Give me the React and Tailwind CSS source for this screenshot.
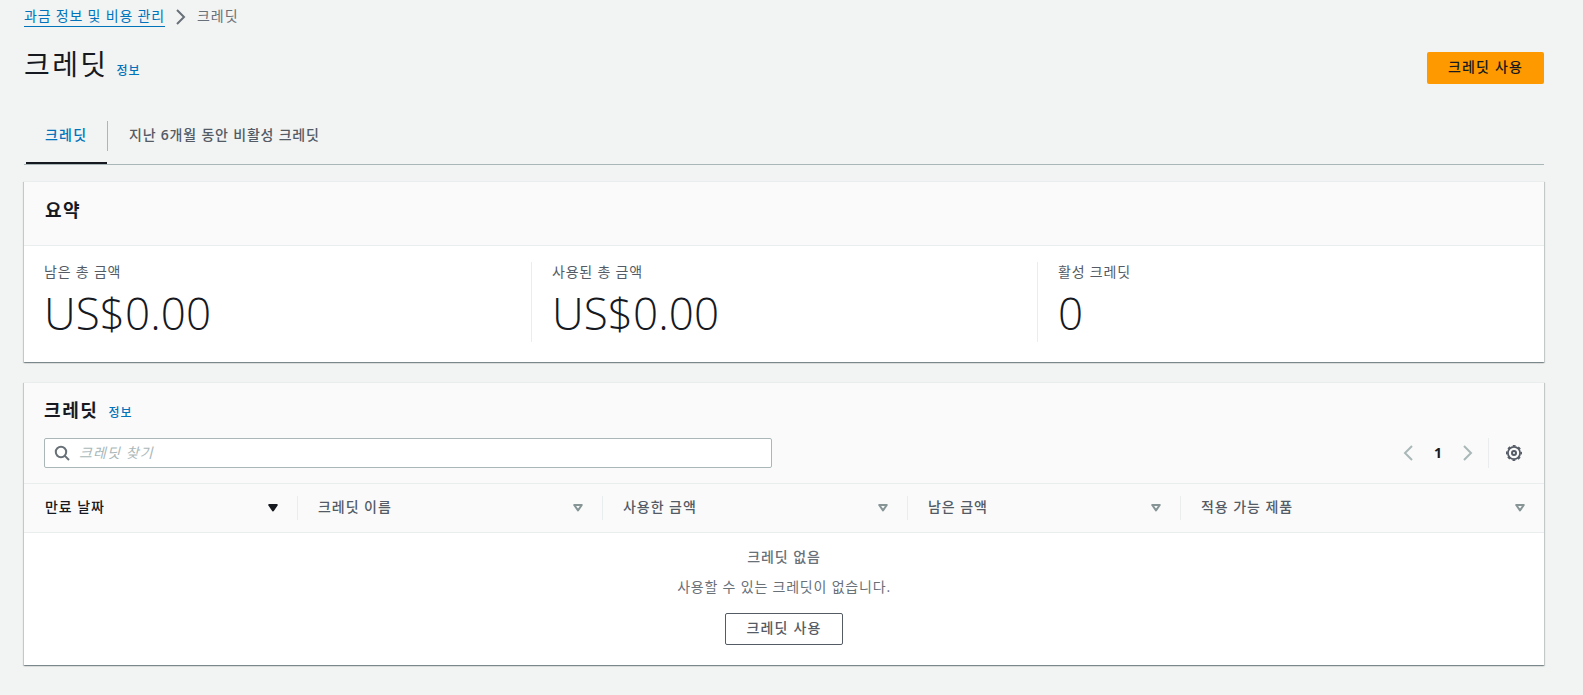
import React from "react";

const columns = [
  { label: "만료 날짜", width: "w-[273px]", sorted: true },
  { label: "크레딧 이름", width: "w-[305px]" },
  { label: "사용한 금액", width: "w-[305px]" },
  { label: "남은 금액", width: "w-[273px]" },
  { label: "적용 가능 제품", width: "flex-1" },
];

const summary = [
  { label: "남은 총 금액", value: "US$0.00", width: "w-[507px]" },
  { label: "사용된 총 금액", value: "US$0.00", width: "w-[506px]" },
  { label: "활성 크레딧", value: "0", width: "flex-1" },
];

const card =
  "bg-white border-t border-[#eaeded] shadow-[0_1px_1px_0_rgba(0,28,36,0.3),1px_1px_1px_0_rgba(0,28,36,0.15),-1px_1px_1px_0_rgba(0,28,36,0.15)]";

function Chevron({ className, left }) {
  return (
    <svg viewBox="0 0 16 16" className={className} fill="none" stroke="currentColor" strokeWidth="2">
      <path d={left ? "M12 1L5 8l7 7" : "M4 1l7 7-7 7"} />
    </svg>
  );
}

function SortIcon({ filled }) {
  return (
    <svg viewBox="0 0 16 16" className={filled ? "size-4 text-[#16191f]" : "size-4 text-[#879596]"}>
      <path
        d="M4.2 5h7.6L8 10.4z"
        fill={filled ? "currentColor" : "none"}
        stroke="currentColor"
        strokeWidth="2"
        strokeLinejoin="round"
      />
    </svg>
  );
}

function SearchIcon() {
  return (
    <svg viewBox="0 0 16 16" className="size-4 text-[#687078]" fill="none" stroke="currentColor" strokeWidth="2">
      <circle cx="7" cy="7" r="5.2" />
      <path d="M10.6 10.6L15 15" />
    </svg>
  );
}

function GearIcon() {
  return (
    <svg viewBox="0 0 16 16" className="size-4 text-[#545b64]" fill="none" stroke="currentColor" strokeWidth="2">
      <circle cx="8" cy="8" r="6.1" strokeWidth="1.8" />
      {/* eight teeth around the rim */}
      <circle cx="8" cy="8" r="7.3" strokeWidth="1.4" strokeDasharray="2.9 2.833" strokeDashoffset="1.45" />
      <circle cx="8" cy="8" r="2" />
    </svg>
  );
}

function Header() {
  return (
    <header>
      <nav className="flex h-[34px] items-center pb-px">
        <a className="h-5 border-b border-[#0073bb] leading-[18px] text-[#0073bb]">과금 정보 및 비용 관리</a>
        <Chevron className="mx-2 size-4 text-[#687078]" />
        <span className="pb-0.5 tracking-[1.1px] text-[#687078]">크레딧</span>
      </nav>
      <div className="flex justify-between">
        <div className="flex h-[51px] items-baseline pt-2">
          <h1 className="text-[28px] leading-[44px] tracking-[2.4px]">크레딧</h1>
          <a className="ml-2 text-xs font-medium tracking-[1px] text-[#0073bb]">정보</a>
        </div>
        <button className="mt-[18px] h-8 w-[117px] rounded-[2px] bg-[#ff9900] pb-0.5 font-medium tracking-[1.2px]">
          크레딧 사용
        </button>
      </div>
    </header>
  );
}

function Tabs() {
  return (
    <div className="mt-8 flex h-[48px] border-b border-[#aab7b8] font-medium">
      <div className="ml-0.5 w-[81px] border-b-2 border-[#16191f] pt-1.5 pl-[19px] leading-6 tracking-[1.2px] text-[#0073bb]">
        크레딧
      </div>
      <div className="mt-1 h-[30px] border-l border-[#aab7b8] pt-0.5 pl-[21px] leading-6 text-[#545b64]">
        지난 <span className="font-semibold">6</span>개월 동안 비활성 크레딧
      </div>
    </div>
  );
}

function Summary() {
  return (
    <section className={`${card} mt-4 h-[181px]`}>
      <div className="h-[64px] border-b border-[#eaeded] bg-[#fafafa] px-[21px] pt-4">
        <h2 className="text-lg leading-6 font-bold tracking-[1.4px]">요약</h2>
      </div>
      <div className="flex pt-4">
        {summary.map((s, i) => (
          <div key={s.label} className={`${s.width} ${i ? "border-l border-[#eaeded] pl-5" : "pl-5"} h-20`}>
            <div className="h-[22px] leading-5 text-[#545b64]">{s.label}</div>
            <div className="text-[44px] leading-[58px] font-light tracking-[0.1px]">{s.value}</div>
          </div>
        ))}
      </div>
    </section>
  );
}

function Credits() {
  return (
    <section className={`${card} mt-5 h-[283px]`}>
      <div className="h-[101px] border-b border-[#eaeded] bg-[#fafafa] px-5 pt-[15px]">
        <div className="flex items-baseline">
          <h2 className="text-lg leading-6 font-bold tracking-[1.6px]">크레딧</h2>
          <a className="ml-2.5 text-xs font-medium tracking-[1px] text-[#0073bb]">정보</a>
        </div>
        <div className="mt-4 flex h-[30px] items-center">
          <div className="flex h-[30px] w-[728px] items-center rounded-[2px] border border-[#aab7b8] bg-white pl-[9px]">
            <SearchIcon />
            <span className="ml-[9px] pb-px tracking-[1.1px] text-[#aab7b8] italic">크레딧 찾기</span>
          </div>
          <div className="mr-0.5 ml-auto flex items-center">
            <Chevron left className="size-4 text-[#aab7b8]" />
            <span className="w-11 text-center font-bold tracking-normal">1</span>
            <Chevron className="size-4 text-[#aab7b8]" />
            <div className="ml-3 flex h-[30px] items-center border-l border-[#eaeded] pl-[17px]">
              <GearIcon />
            </div>
          </div>
        </div>
      </div>
      <div className="flex h-[49px] items-center border-b border-[#eaeded] bg-[#fafafa]">
        {columns.map((c, i) => (
          <div
            key={c.label}
            className={`${c.width} ${i ? "border-l border-[#eaeded] pl-5" : "pl-[21px]"} ${c.sorted ? "text-[#16191f]" : "text-[#545b64]"} flex h-6 items-center justify-between pr-4 font-medium`}
          >
            <span className="pb-0.5 tracking-[0.95px]">{c.label}</span>
            <SortIcon filled={c.sorted} />
          </div>
        ))}
      </div>
      <div className="flex flex-col items-center pt-3.5 text-[#687078]">
        <div className="h-[22px] leading-5 font-medium tracking-[0.95px]">크레딧 없음</div>
        <div className="mt-2 h-[22px] leading-5">사용할 수 있는 크레딧이 없습니다.</div>
        <button className="mt-3.5 h-8 w-[118px] rounded-[2px] border border-[#545b64] bg-white pb-0.5 font-medium tracking-[1.2px] text-[#545b64]">
          크레딧 사용
        </button>
      </div>
    </section>
  );
}

export default function App() {
  return (
    <div className="h-[695px] overflow-hidden bg-[#f2f3f3] pr-[39px] pl-6 font-['Open_Sans','Noto_Sans_CJK_KR',sans-serif] text-sm tracking-[0.8px] text-[#16191f]">
      <Header />
      <Tabs />
      <Summary />
      <Credits />
    </div>
  );
}
